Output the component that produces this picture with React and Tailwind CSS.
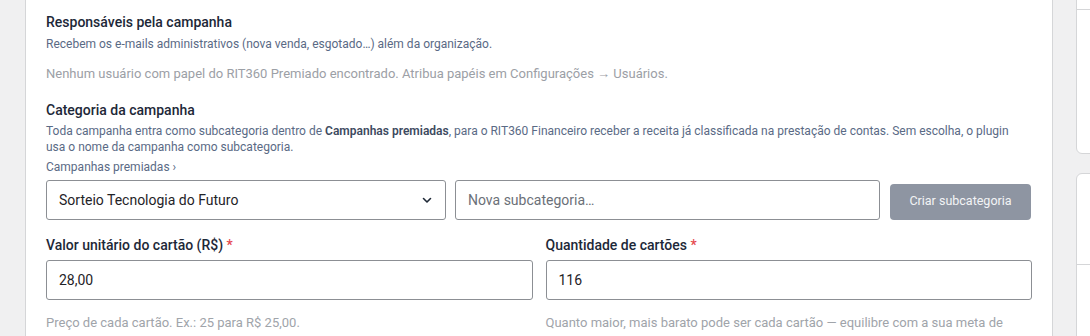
import React from 'react';

const font = { fontFamily: 'Roboto, "Noto Sans", sans-serif' };

const Chevron = () => (
  <svg width="12" height="12" viewBox="0 0 12 12" fill="none">
    <path d="M2.5 4.5 L6 8 L9.5 4.5" stroke="#1f2937" strokeWidth="1.6" strokeLinecap="round" strokeLinejoin="round" />
  </svg>
);

const App = () => {
  return (
    <div className="flex h-[336px] w-[1090px] overflow-hidden bg-[#f0f0f1]" style={font}>
      {/* painel principal */}
      <div className="ml-[25px] w-[1028px] shrink-0 border-x border-[#d5d6d8] bg-white px-5 pt-3">
        <h3 className="text-[14px] leading-5 font-medium text-[#1d2838]">Responsáveis pela campanha</h3>
        <p className="mt-1 text-[12px] leading-4 text-[#5a6a85]">
          Recebem os e-mails administrativos (nova venda, esgotado…) além da organização.
        </p>
        <p className="mt-3 text-[13px] leading-5 text-[#9ca0a6]">
          Nenhum usuário com papel do RIT360 Premiado encontrado. Atribua papéis em Configurações → Usuários.
        </p>

        <h3 className="mt-4 text-[14px] leading-5 font-medium text-[#1d2838]">Categoria da campanha</h3>
        <p className="mt-[3px] max-w-[975px] text-[12px] leading-4 text-[#5a6a85]">
          Toda campanha entra como subcategoria dentro de <strong className="font-semibold text-[#3d4a60]">Campanhas premiadas</strong>, para o RIT360 Financeiro receber a receita já classificada na prestação de contas. Sem escolha, o plugin usa o nome da campanha como subcategoria.
        </p>
        <p className="mt-1 text-[12px] leading-4 text-[#5a6a85]">Campanhas premiadas ›</p>

        <div className="mt-[5px] flex items-center">
          <div className="flex h-10 w-[400px] items-center justify-between rounded-[3px] border border-[#8c8f94] pl-3 pr-3">
            <span className="text-[14px] text-[#1f2328]">Sorteio Tecnologia do Futuro</span>
            <Chevron />
          </div>
          <div className="ml-[9px] flex h-10 w-[425px] items-center rounded-[3px] border border-[#8c8f94] px-3">
            <span className="text-[14px] text-[#6b7078]">Nova subcategoria…</span>
          </div>
          <button className="ml-[10px] mt-[3px] h-[36px] w-[141px] rounded-[4px] bg-[#8e95a2] text-[12.5px] text-[#f3f4f6]">
            Criar subcategoria
          </button>
        </div>

        <div className="mt-[15px] grid grid-cols-2 gap-x-[13px]">
          <div>
            <label className="block text-[14px] leading-5 font-medium text-[#1d2838]">
              Valor unitário do cartão (R$) <span className="text-[#e5484d]">*</span>
            </label>
            <div className="mt-[5px] flex h-10 items-center rounded-[3px] border border-[#8c8f94] px-3 text-[14px] text-[#1f2328]">
              28,00
            </div>
            <p className="mt-[13px] text-[13px] leading-5 text-[#a0a4aa]">Preço de cada cartão. Ex.: 25 para R$ 25,00.</p>
          </div>
          <div>
            <label className="block text-[14px] leading-5 font-medium text-[#1d2838]">
              Quantidade de cartões <span className="text-[#e5484d]">*</span>
            </label>
            <div className="mt-[5px] flex h-10 items-center rounded-[3px] border border-[#8c8f94] px-3 text-[14px] text-[#1f2328]">
              116
            </div>
            <p className="mt-[13px] text-[13px] leading-5 text-[#a0a4aa]">
              Quanto maior, mais barato pode ser cada cartão — equilibre com a sua meta de arrecadação.
            </p>
          </div>
        </div>
      </div>

      {/* coluna lateral */}
      <div className="ml-[23px] flex w-[40px] shrink-0 flex-col">
        <div className="-mt-4 h-[170px] shrink-0 rounded-md border border-[#d5d6d8] bg-white">
          <div className="mt-[24px] border-t border-[#d5d6d8]" />
        </div>
        <div className="mt-[19px] h-[200px] shrink-0 rounded-md border border-[#d5d6d8] bg-white">
          <div className="mt-[90px] border-t border-[#d5d6d8]" />
        </div>
      </div>
    </div>
  );
};

export default App;
